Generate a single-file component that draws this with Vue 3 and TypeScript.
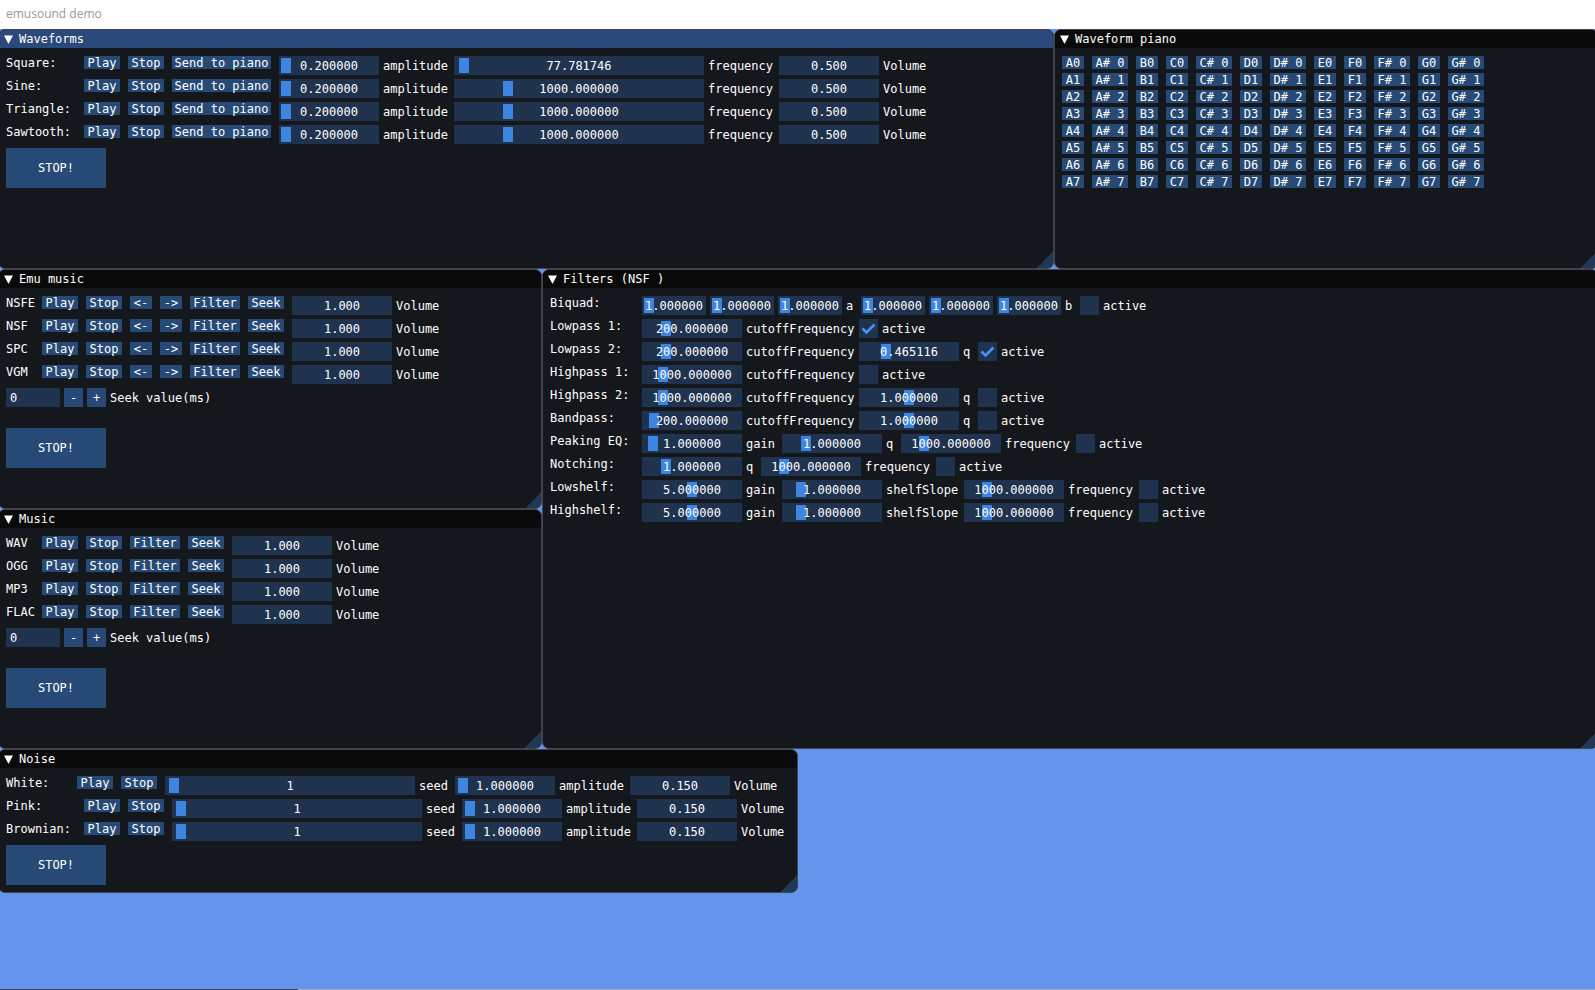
<script setup lang="ts">
import { reactive } from 'vue'

type Item =
  | { kind: 'button'; text: string }
  | { kind: 'slider'; text: string; grab: number; width: number; label?: string }
  | { kind: 'drag'; text: string; label: string }
  | { kind: 'check'; on: boolean }

interface Row {
  name: string
  chars: number
  items: Item[]
}

interface Panel {
  id: string
  title: string
  rows: Row[]
  seek?: boolean
  stop?: boolean
}

const CHAR = 7

const btn = (text: string): Item => ({ kind: 'button', text })
const slider = (text: string, grab: number, label?: string, width = 100): Item => ({
  kind: 'slider', text, grab, width, label,
})
const volume = (text: string): Item => ({ kind: 'drag', text, label: 'Volume' })
const active = (on = false): Item => ({ kind: 'check', on })

const wave = (name: string, freq: string, grab: number): Row => ({
  name,
  chars: 10,
  items: [
    btn('Play'), btn('Stop'), btn('Send to piano'),
    slider('0.200000', 0, 'amplitude'),
    slider(freq, grab, 'frequency', 250),
    volume('0.500'),
  ],
})

const track = (name: string, extra: string[]): Row => ({
  name,
  chars: 4,
  items: [...['Play', 'Stop', ...extra, 'Filter', 'Seek'].map(btn), volume('1.000')],
})

const noise = (name: string, chars: number): Row => ({
  name,
  chars,
  items: [
    btn('Play'), btn('Stop'),
    slider('1', 2, 'seed', 250),
    slider('1.000000', 1, 'amplitude'),
    volume('0.150'),
  ],
})

const filter = (name: string, ...items: Item[]): Row => ({ name, chars: 12, items })
const cutoff = (text: string, grab: number) => slider(text, grab, 'cutoffFrequency')
const coef = (label?: string) => slider('1.000000', 0, label, 64)
const freq = () => slider('1000.000000', 16, 'frequency')

const panels = reactive<Panel[]>([
  {
    id: 'waveforms',
    title: 'Waveforms',
    stop: true,
    rows: [
      wave('Square:', '77.781746', 3),
      wave('Sine:', '1000.000000', 47),
      wave('Triangle:', '1000.000000', 47),
      wave('Sawtooth:', '1000.000000', 47),
    ],
  },
  {
    id: 'piano',
    title: 'Waveform piano',
    rows: [],
  },
  {
    id: 'emu',
    title: 'Emu music',
    seek: true,
    stop: true,
    rows: ['NSFE', 'NSF', 'SPC', 'VGM'].map((n) => track(n, ['<-', '->'])),
  },
  {
    id: 'filters',
    title: 'Filters (NSF )',
    rows: [
      filter('Biquad:', coef(), coef(), coef('a'), coef(), coef(), coef('b'), active()),
      filter('Lowpass 1:', cutoff('200.000000', 17), active(true)),
      filter('Lowpass 2:', cutoff('200.000000', 17), slider('0.465116', 20, 'q'), active(true)),
      filter('Highpass 1:', cutoff('1000.000000', 14), active()),
      filter('Highpass 2:', cutoff('1000.000000', 14), slider('1.000000', 43, 'q'), active()),
      filter('Bandpass:', cutoff('200.000000', 5), slider('1.000000', 43, 'q'), active()),
      filter('Peaking EQ:', slider('1.000000', 4, 'gain'), slider('1.000000', 17, 'q'), freq(), active()),
      filter('Notching:', slider('1.000000', 17, 'q'), freq(), active()),
      filter('Lowshelf:', slider('5.000000', 43, 'gain'), slider('1.000000', 12, 'shelfSlope'), freq(), active()),
      filter('Highshelf:', slider('5.000000', 43, 'gain'), slider('1.000000', 12, 'shelfSlope'), freq(), active()),
    ],
  },
  {
    id: 'music',
    title: 'Music',
    seek: true,
    stop: true,
    rows: ['WAV', 'OGG', 'MP3', 'FLAC'].map((n) => track(n, [])),
  },
  {
    id: 'noise',
    title: 'Noise',
    stop: true,
    rows: [noise('White:', 9), noise('Pink:', 10), noise('Brownian:', 10)],
  },
])

const notes = ['A', 'A# ', 'B', 'C', 'C# ', 'D', 'D# ', 'E', 'F', 'F# ', 'G', 'G# ']
const octaves = [0, 1, 2, 3, 4, 5, 6, 7]

const textWidth = (chars: number, pad = 0) => ({ width: `${chars * CHAR + pad}px` })
</script>

<template>
  <div class="app">
    <header class="caption">emusound demo</header>
    <main class="desktop">
      <section
        v-for="p in panels"
        :key="p.id"
        class="panel"
        :class="[p.id, { focused: p.id === 'waveforms' }]"
      >
        <h2 class="title">
          <button class="collapse" type="button" :aria-label="`Collapse ${p.title}`">
            <svg width="13" height="13" viewBox="0 0 13 13">
              <path d="M2 2.5H11L6.5 11Z" fill="#fff" />
            </svg>
          </button>
          <span>{{ p.title }}</span>
        </h2>

        <div class="content">
          <div v-if="p.id === 'piano'" class="keys">
            <div v-for="o in octaves" :key="o" class="row">
              <button
                v-for="n in notes"
                :key="n"
                type="button"
                class="small"
                :style="textWidth(n.length + 1, 8)"
              >{{ n }}{{ o }}</button>
            </div>
          </div>

          <div v-for="row in p.rows" :key="row.name" class="row">
            <span class="name" :style="textWidth(row.chars)">{{ row.name }}</span>
            <template v-for="(it, i) in row.items" :key="i">
              <button
                v-if="it.kind === 'button'"
                type="button"
                class="small"
                :style="textWidth(it.text.length, 8)"
              >{{ it.text }}</button>

              <label v-else-if="it.kind === 'slider'" class="field" :class="{ joined: !it.label }">
                <span class="frame" :style="{ width: `${it.width}px` }">
                  <input
                    v-model.number="it.grab"
                    type="range"
                    min="0"
                    :max="it.width - 14"
                    :aria-label="`${row.name} ${it.label ?? 'coefficient'}`"
                  />
                  <span class="value">{{ it.text }}</span>
                </span>
                <span v-if="it.label" class="label" :style="textWidth(it.label.length)">{{ it.label }}</span>
              </label>

              <label v-else-if="it.kind === 'drag'" class="field">
                <input v-model="it.text" type="text" class="drag" />
                <span class="label" :style="textWidth(it.label.length)">{{ it.label }}</span>
              </label>

              <label v-else class="field">
                <span class="box">
                  <input v-model="it.on" type="checkbox" />
                  <svg v-if="it.on" width="19" height="19" viewBox="0 0 19 19">
                    <path d="M3.5 9.5L7.5 13.5L15.5 5.5" fill="none" stroke="#4296fa" stroke-width="2.6" />
                  </svg>
                </span>
                <span class="label">active</span>
              </label>
            </template>
          </div>

          <div v-if="p.seek" class="row seek">
            <input :id="`${p.id}-seek`" class="number" type="text" value="0" />
            <button type="button" class="step" aria-label="Decrease">-</button>
            <button type="button" class="step" aria-label="Increase">+</button>
            <label :for="`${p.id}-seek`" class="label">Seek value(ms)</label>
          </div>

          <button v-if="p.stop" type="button" class="stop">STOP!</button>
        </div>
      </section>
    </main>
    <footer class="edge"></footer>
  </div>
</template>

<style>
body {
  margin: 0;
  background: #6495ed;
}
</style>

<style scoped>
* {
  box-sizing: border-box;
}

.app {
  display: flex;
  flex-direction: column;
  min-height: 100vh;
  overflow: hidden;
  background: #6495ed;
  color: #fff;
  font: 12px/13px "DejaVu Sans Mono", "Liberation Mono", monospace;
}

.caption {
  height: 29px;
  padding: 0 6px;
  background: #fff;
  color: #999;
  font: 12px/28px "Open Sans", "Noto Sans", sans-serif;
}

.desktop {
  flex: 1;
  display: grid;
  grid-template-columns: 34% 16% 16% 34%;
  grid-template-rows: 240px 240px 240px auto;
  align-content: start;
  margin: 0 -3px 0 -2px;
}

.waveforms { grid-area: 1 / 1 / 2 / 4; }
.piano { grid-area: 1 / 4 / 2 / 5; }
.emu { grid-area: 2 / 1 / 3 / 2; }
.music { grid-area: 3 / 1 / 4 / 2; }
.filters { grid-area: 2 / 2 / 4 / 5; }
.noise { grid-area: 4 / 1 / 5 / 3; }

.panel {
  border: 1px solid #42434c;
  border-radius: 7px;
  overflow: hidden;
  background: linear-gradient(to bottom right, transparent 50%, #203857 50%) no-repeat right bottom / 16px 16px #14171c;
}

.title {
  display: flex;
  align-items: center;
  gap: 4px;
  height: 18px;
  margin: 0;
  padding: 0 3px;
  background: #0a0a0a;
  font: inherit;
}

.focused .title {
  background: #294a7a;
}

.content {
  display: flex;
  flex-direction: column;
  align-items: flex-start;
  gap: 4px;
  padding: 8px 7px 7px;
}

.keys {
  display: flex;
  flex-direction: column;
  gap: 4px;
}

.row {
  display: flex;
  align-items: flex-start;
  gap: 8px;
  white-space: pre;
}

.name,
.label {
  flex: none;
}

.name {
  line-height: 15px;
}

.label,
.value {
  height: 19px;
  line-height: 21px;
}

button {
  flex: none;
  display: flex;
  justify-content: center;
  align-items: center;
  margin: 0;
  padding: 0;
  border: 0;
  background: #264a75;
  color: inherit;
  font: inherit;
  white-space: pre;
}

.collapse {
  width: 13px;
  height: 13px;
  background: none;
}

.small {
  align-items: flex-start;
  height: 13px;
  line-height: 15px;
}

.step {
  align-items: flex-start;
  width: 19px;
  height: 19px;
  line-height: 21px;
}

.stop {
  width: 100px;
  height: 40px;
}

.field {
  display: flex;
  gap: 4px;
}

.joined {
  margin-right: -4px;
}

.frame,
.box {
  display: grid;
  height: 19px;
  background: #1f334f;
}

.frame > *,
.box > * {
  grid-area: 1 / 1;
}

.value {
  text-align: center;
  pointer-events: none;
  z-index: 1;
}

input {
  margin: 0;
  border: 0;
  border-radius: 0;
  color: inherit;
  font: inherit;
  appearance: none;
  outline: none;
}

input[type="range"] {
  width: 100%;
  height: 19px;
  padding: 2px;
  background: none;
}

input[type="range"]::-webkit-slider-thumb {
  appearance: none;
  width: 10px;
  height: 15px;
  border-radius: 0;
  background: #3d85e0;
}

input[type="checkbox"] {
  width: 19px;
  height: 19px;
}

.drag {
  width: 100px;
  height: 19px;
  padding: 0;
  background: #1f334f;
  text-align: center;
}

.seek {
  gap: 4px;
}

.number {
  width: 54px;
  height: 19px;
  padding: 0 4px;
  background: #1f334f;
}

.seek + .stop {
  margin-top: 17px;
}

.edge {
  height: 1px;
  background: linear-gradient(to right, #3a4454 298px, #b0b0b0 298px);
}
</style>
